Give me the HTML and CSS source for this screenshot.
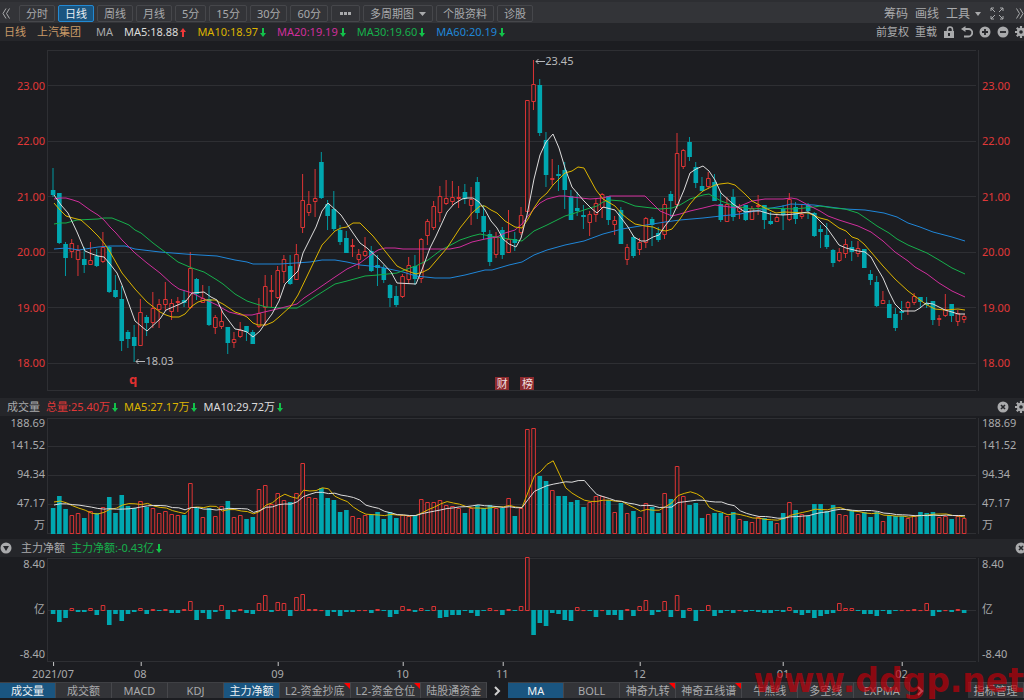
FILE: index.html
```
<!DOCTYPE html>
<html lang="zh-CN">
<head>
  <meta charset="UTF-8">
  <title>上汽集团 日线</title>
  <link rel="stylesheet" href="styles.css">
</head>
<body>
  <svg class="sprite" aria-hidden="true">
    <symbol id="up" viewBox="0 0 6 9"><path d="M3 0 L6 4 H4 V9 H2 V4 H0 Z"/></symbol>
    <symbol id="down" viewBox="0 0 6 9"><path d="M3 9 L6 5 H4 V0 H2 V5 H0 Z"/></symbol>
    <symbol id="gear" viewBox="0 0 12 12">
      <circle cx="6" cy="6" r="3" fill="none" stroke="currentColor" stroke-width="2.4"/>
      <path d="M6 0V3M6 9V12M0 6H3M9 6H12M1.8 1.8L3.8 3.8M8.2 8.2L10.2 10.2M10.2 1.8L8.2 3.8M1.8 10.2L3.8 8.2" stroke="currentColor" stroke-width="2.2"/>
    </symbol>
    <symbol id="close" viewBox="0 0 12 12">
      <circle cx="6" cy="6" r="5.5"/>
      <path d="M4 4L8 8M8 4L4 8" stroke="#25262a" stroke-width="1.6"/>
    </symbol>
  </svg>

  <header class="toolbar">
    <button class="chevron" aria-label="收起"><svg width="8" height="11" viewBox="0 0 8 11"><path d="M4 0.5L1 5.5L4 10.5M7.5 0.5L4.5 5.5L7.5 10.5" fill="none" stroke="currentColor"/></svg></button>
    <nav class="periods">
      <button>分时</button>
      <button class="active">日线</button>
      <button>周线</button>
      <button>月线</button>
      <button>5分</button>
      <button>15分</button>
      <button>30分</button>
      <button>60分</button>
      <button class="more" aria-label="更多"><svg width="13" height="3" viewBox="0 0 13 3"><path d="M1 0h3v3h-3zM5 0h3v3h-3zM9 0h3v3h-3z"/></svg></button>
      <button>多周期图<svg class="caret" width="7" height="4" viewBox="0 0 7 4"><path d="M0 0H7L3.5 4Z"/></svg></button>
      <button>个股资料</button>
      <button>诊股</button>
    </nav>
    <div class="tools">
      <button>筹码</button>
      <button>画线</button>
      <button>工具<svg class="caret" width="6" height="4" viewBox="0 0 6 4"><path d="M0 0H6L3 4Z"/></svg></button>
      <button class="expand" aria-label="全屏"><svg width="14" height="13" viewBox="0 0 14 13"><path d="M1 4V1H4M1 1L5 5M10 1H13V4M13 1L9 5M1 9V12H4M1 12L5 8M13 9V12H10M13 12L9 8" fill="none" stroke="currentColor"/></svg></button>
      <button aria-label="展开"><svg width="8" height="11" viewBox="0 0 8 11"><path d="M0.5 0.5L3.5 5.5L0.5 10.5M4 0.5L7 5.5L4 10.5" fill="none" stroke="currentColor"/></svg></button>
    </div>
  </header>

  <section class="legend main-legend">
    <span class="gold">日线</span>
    <span class="gold">上汽集团</span>
    <span class="ma-name">MA</span>
    <span class="white">MA5:18.88<svg class="arrow up"><use href="#up"/></svg></span>
    <span class="yellow">MA10:18.97<svg class="arrow"><use href="#down"/></svg></span>
    <span class="magenta">MA20:19.19<svg class="arrow"><use href="#down"/></svg></span>
    <span class="green">MA30:19.60<svg class="arrow"><use href="#down"/></svg></span>
    <span class="blue">MA60:20.19<svg class="arrow"><use href="#down"/></svg></span>
    <div class="actions">
      <button>前复权</button>
      <button>重载</button>
      <button aria-label="锁定"><svg class="icon" viewBox="0 0 12 12"><path d="M1 5H11V12H1Z"/><path d="M4.500 5V3.500A2.500 2.500 0 0 1 9.500 3.500V5" fill="none" stroke="currentColor" stroke-width="1.500"/><path d="M5 7H7V10H5Z" fill="#25262a"/></svg></button>
      <button aria-label="撤销"><svg class="icon" viewBox="0 0 12 12"><path d="M2 3H7.500A3.500 3.500 0 0 1 7.500 10.500H3" fill="none" stroke="currentColor" stroke-width="1.800"/><path d="M0 3L4.500 0V6Z"/></svg></button>
      <button aria-label="放大"><svg class="icon" viewBox="0 0 12 12"><circle cx="6" cy="6" r="5.500"/><path d="M3 6H9M6 3V9" stroke="#25262a" stroke-width="1.800"/></svg></button>
      <button aria-label="缩小"><svg class="icon" viewBox="0 0 12 12"><circle cx="6" cy="6" r="5.500"/><path d="M3 6H9" stroke="#25262a" stroke-width="1.800"/></svg></button>
      <button aria-label="设置"><svg class="icon"><use href="#gear"/></svg></button>
    </div>
  </section>

  <section class="panel price-panel">
    <div class="axis price-axis left"><span>23.00</span><span>22.00</span><span>21.00</span><span>20.00</span><span>19.00</span><span>18.00</span></div>
    <div class="plot">
      <svg id="price" viewBox="48 50 930 341" preserveAspectRatio="none"></svg>
      <span class="note high"><svg width="10" height="7" viewBox="0 0 10 7"><path d="M10 3.500H1M3.500 1L1 3.500L3.500 6" fill="none" stroke="currentColor"/></svg>23.45</span>
      <span class="note low"><svg width="10" height="7" viewBox="0 0 10 7"><path d="M10 3.500H1M3.500 1L1 3.500L3.500 6" fill="none" stroke="currentColor"/></svg>18.03</span>
      <span class="mark-q">q</span>
      <span class="tag finance">财</span>
      <span class="tag rank">榜</span>
    </div>
    <div class="axis price-axis right"><span>23.00</span><span>22.00</span><span>21.00</span><span>20.00</span><span>19.00</span><span>18.00</span></div>
  </section>

  <section class="legend volume-legend">
    <span>成交量</span>
    <span class="red">总量:25.40万<svg class="arrow"><use href="#down"/></svg></span>
    <span class="yellow">MA5:27.17万<svg class="arrow"><use href="#down"/></svg></span>
    <span class="white">MA10:29.72万<svg class="arrow"><use href="#down"/></svg></span>
    <div class="actions">
      <button aria-label="关闭"><svg class="icon"><use href="#close"/></svg></button>
      <button aria-label="设置"><svg class="icon"><use href="#gear"/></svg></button>
    </div>
  </section>

  <section class="panel volume-panel">
    <div class="axis volume-axis left"><span>188.69</span><span>141.52</span><span>94.34</span><span>47.17</span><span>万</span></div>
    <div class="plot"><svg id="volume" viewBox="48 418 930 116" preserveAspectRatio="none"></svg></div>
    <div class="axis volume-axis right"><span>188.69</span><span>141.52</span><span>94.34</span><span>47.17</span><span>万</span></div>
  </section>

  <section class="legend flow-legend">
    <button aria-label="选择指标"><svg class="icon" viewBox="0 0 12 12"><circle cx="6" cy="6" r="5.500"/><path d="M3 4H9L6 9Z" fill="#25262a"/></svg></button>
    <span>主力净额</span>
    <span class="green">主力净额:-0.43亿<svg class="arrow"><use href="#down"/></svg></span>
    <div class="actions">
      <button aria-label="关闭"><svg class="icon"><use href="#close"/></svg></button>
    </div>
  </section>

  <section class="panel flow-panel">
    <div class="axis flow-axis left"><span>8.40</span><span>亿</span><span>-8.40</span></div>
    <div class="plot"><svg id="flow" viewBox="48 558 930 104" preserveAspectRatio="none"></svg></div>
    <div class="axis flow-axis right"><span>8.40</span><span>亿</span><span>-8.40</span></div>
  </section>

  <div class="dates" id="dates"></div>

  <footer class="tabs">
    <button class="active">成交量</button>
    <button>成交额</button>
    <button>MACD</button>
    <button>KDJ</button>
    <button class="active">主力净额</button>
    <button class="hot">L2-资金抄底</button>
    <button class="hot">L2-资金仓位</button>
    <button>陆股通资金</button>
    <button class="next" aria-label="更多指标"><svg width="7" height="10" viewBox="0 0 7 10"><path d="M1 1L5 5L1 9" fill="none" stroke="currentColor" stroke-width="2"/></svg></button>
    <button class="active">MA</button>
    <button>BOLL</button>
    <button class="hot">神奇九转</button>
    <button class="hot">神奇五线谱</button>
    <button>牛熊线</button>
    <button>多空线</button>
    <button>EXPMA</button>
    <button class="next" aria-label="更多主图指标"><svg width="7" height="10" viewBox="0 0 7 10"><path d="M1 1L5 5L1 9" fill="none" stroke="currentColor" stroke-width="2"/></svg></button>
    <button class="manage">指标管理</button>
  </footer>

  <div class="watermark">www.ddgp.net</div>

  <script src="chart.js"></script>
</body>
</html>
```
FILE: styles.css
```
* {
  box-sizing: border-box;
}

body {
  margin: 0;
  height: 100vh;
  min-height: 500px;
  display: flex;
  flex-direction: column;
  overflow: hidden;
  position: relative;
  background: #1c1d21;
  color: #a9aaac;
  font-family: "Noto Sans", "Noto Sans CJK SC", sans-serif;
  font-size: 11px;
  line-height: 16px;
  white-space: nowrap;
}

button {
  font: inherit;
  color: inherit;
  background: none;
  border: none;
  padding: 0;
  display: flex;
  align-items: center;
  justify-content: center;
  cursor: pointer;
}

svg {
  fill: currentColor;
  flex: none;
}

.sprite {
  display: none;
}

/* toolbar */
.toolbar {
  flex: none;
  height: 23px;
  padding: 2px 0 0 2px;
  display: flex;
  align-items: center;
  background: #333438;
  border-top: 2px solid #2d2e32;
}

.chevron {
  width: 17px;
  justify-content: flex-start;
}

.periods {
  display: flex;
  gap: 3px;
}

.periods button {
  height: 17px;
  padding: 0 6px;
  border: 1px solid #46474b;
  border-radius: 2px;
}

.periods .more {
  padding: 0 7px;
}

.periods .active {
  background: #1a5580;
  border-color: #2389d3;
  color: #e8eef2;
}

.caret {
  margin-left: 5px;
}

.tools {
  margin-left: auto;
  display: flex;
  align-items: center;
  gap: 7px;
  font-size: 12px;
}

.expand {
  margin: 0 5px 0 2px;
}

/* legends */
.legend {
  flex: none;
  height: 18px;
  display: flex;
  align-items: center;
  gap: 6px;
  padding-left: 7px;
  background: #25262a;
}

.legend span {
  display: flex;
  align-items: center;
}

.main-legend {
  gap: 11px;
  padding-left: 4px;
}

.ma-name {
  margin-left: 4px;
}

.volume-legend {
  margin-top: 7px;
}

.flow-legend {
  margin-top: 5px;
  padding-left: 0;
}

.flow-legend button + span {
  margin-left: 3px;
}

.arrow {
  width: 6px;
  height: 9px;
  margin-left: 2px;
  color: #12c24a;
}

.arrow.up {
  color: #f03838;
}

.actions {
  margin-left: auto;
  margin-right: -3px;
  display: flex;
  gap: 6px;
}

.icon {
  width: 12px;
  height: 12px;
}

.gold { color: #c99a68; }
.white { color: #dcdcdc; }
.yellow { color: #dcb400; }
.magenta { color: #d02e9c; }
.green { color: #16b04c; }
.blue { color: #1f86d8; }
.red { color: #e03838; }

/* chart panels */
.panel {
  display: grid;
  grid-template-columns: 48px minmax(0, 1fr) 46px;
  grid-template-rows: minmax(0, 1fr);
  min-height: 0;
}

.price-panel {
  flex: 341;
  margin-top: 9px;
}

.volume-panel {
  flex: 116;
  margin-top: 2px;
}

.flow-panel {
  flex: 104;
  margin-top: 1px;
}

.plot {
  position: relative;
  min-height: 0;
}

.plot > svg {
  display: block;
  width: 100%;
  height: 100%;
  overflow: visible;
}

.axis.left {
  text-align: right;
  padding-right: 3px;
}

.axis.right {
  padding-left: 4px;
}

.price-axis {
  display: flex;
  flex-direction: column;
  padding-top: 8px;
  color: #e03838;
}

.price-axis span {
  flex: 1;
  display: flex;
  align-items: center;
}

.price-axis.left span {
  justify-content: flex-end;
}

.volume-axis {
  display: grid;
  grid-template-rows: 22fr 29fr 29fr 22fr 14fr;
  line-height: 10px;
}

.flow-axis {
  display: flex;
  flex-direction: column;
  justify-content: space-between;
  padding-bottom: 2px;
  line-height: 12px;
}

/* chart shapes */
.plot path,
.plot line,
.plot rect,
.plot polyline {
  vector-effect: non-scaling-stroke;
}

.grid {
  stroke: #2e2f33;
}

.rise {
  fill: #1c1d21;
  stroke: #dc3434;
}

.fall {
  fill: #00a7b0;
  stroke: none;
}

.wick-rise { stroke: #dc3434; }
.wick-fall { stroke: #009aa2; }

.line {
  fill: none;
  stroke: currentColor;
  stroke-linejoin: round;
}

/* notes over the price chart */
.note {
  position: absolute;
  display: flex;
  align-items: center;
  color: #b9babc;
}

.high {
  left: 52.4%;
  top: 1%;
}

.low {
  left: 9.4%;
  top: 89%;
}

.mark-q {
  position: absolute;
  left: 8.7%;
  top: 94%;
  color: #e03030;
  font-size: 13px;
  font-weight: 700;
}

.tag {
  position: absolute;
  top: 96%;
  width: 14px;
  height: 13px;
  line-height: 13px;
  text-align: center;
  color: #f0dede;
  background: #8c2a2e;
}

.finance { left: 48.1%; }
.rank { left: 50.8%; }

/* date axis */
.dates {
  flex: none;
  height: 20px;
  margin: 0 46px 0 48px;
  position: relative;
}

.dates span {
  position: absolute;
  top: 4px;
  transform: translateX(-50%);
}

.dates span::before {
  content: "";
  position: absolute;
  left: 50%;
  top: -4px;
  width: 1px;
  height: 4px;
  background: #c8c8c8;
}

/* indicator tabs */
.tabs {
  flex: none;
  height: 18px;
  padding-bottom: 2px;
  display: flex;
}

.tabs button {
  position: relative;
  flex: none;
  min-width: 56px;
  padding: 0 5px;
  background: #333438;
  border-top: 1px solid #3f4044;
  border-right: 1px solid #46474b;
}

.tabs .active {
  background: #1a5580;
  color: #eef2f5;
}

.tabs .next {
  min-width: 21px;
  background: none;
  border-color: transparent;
  color: #d0d0d0;
}

.tabs .manage {
  margin-left: auto;
}

.hot::after {
  content: "";
  position: absolute;
  top: 0;
  right: 0;
  border-top: 6px solid #ff0000;
  border-left: 6px solid transparent;
}

.watermark {
  position: absolute;
  right: 0;
  bottom: 0;
  color: rgba(190, 0, 10, 0.7);
  font: bold 33px/38px "DejaVu Sans", sans-serif;
  pointer-events: none;
}
```
FILE: chart.js
```
const STEP = 6.24;
const FIRST = 53;

// rise, high, body top, body bottom, low
const candles = [
  [0,168,190,194,196],[0,193,193,242,243],[0,242,244,257,275],[1,239,243,251,257],[1,245,250,259,275],
  [0,247,259,264,272],[1,242,260,264,264],[0,249,256,265,266],[1,232,247,261,262],[0,246,247,291,292],
  [0,275,290,296,297],[0,286,299,340,350],[0,330,332,338,347],[0,325,337,345,361],[1,299,312,345,345],
  [0,315,317,322,335],[1,292,308,322,327],[1,299,304,309,327],[1,282,299,304,310],[1,299,303,311,319],
  [1,297,301,302,311],[0,290,300,302,306],[1,252,268,307,308],[0,278,279,293,299],[1,285,298,302,302],
  [0,286,299,324,325],[1,315,317,327,333],[1,310,321,326,328],[0,327,327,342,353],[1,332,339,342,347],
  [1,322,330,336,337],[0,326,326,331,340],[0,330,332,343,343],[1,298,313,326,327],[1,275,286,307,325],
  [1,275,290,291,306],[1,266,270,297,298],[1,255,259,271,282],[0,255,266,283,284],[1,244,254,279,279],
  [1,174,200,227,232],[1,191,204,212,215],[1,169,198,201,216],[0,152,162,197,198],[0,200,204,215,229],
  [0,191,209,228,230],[0,225,230,241,244],[0,231,238,252,252],[1,239,245,246,256],[1,249,254,259,268],
  [1,237,251,255,256],[0,246,251,270,271],[0,255,265,267,285],[0,265,268,279,282],[0,284,285,297,306],
  [0,286,296,304,306],[1,274,276,296,297],[1,257,265,279,283],[0,255,266,278,284],[1,238,239,278,282],
  [1,219,221,235,244],[1,201,206,227,229],[1,186,196,212,221],[1,180,198,203,204],[1,181,197,201,204],
  [1,186,197,198,207],[0,184,192,198,203],[1,187,199,205,224],[0,177,182,212,218],[0,205,216,231,238],
  [0,230,234,261,265],[1,232,237,254,257],[0,227,230,254,258],[1,210,239,252,252],[0,232,239,242,250],
  [1,207,215,232,234],[1,100,100,211,211],[1,60,84,101,109],[0,79,85,132,135],[0,132,140,174,186],
  [1,159,178,179,184],[0,165,174,175,190],[0,162,170,189,208],[0,190,196,219,219],[0,192,208,210,215],
  [0,205,215,216,228],[1,211,214,222,235],[1,199,203,214,221],[1,193,194,207,217],[0,196,196,219,224],
  [1,216,220,224,234],[0,207,210,243,243],[1,244,247,259,264],[0,235,237,255,257],[1,238,242,249,254],
  [1,217,218,242,247],[0,217,219,224,245],[0,227,233,239,241],[1,198,204,234,238],[0,191,194,200,217],
  [1,133,153,204,208],[1,149,150,166,168],[0,137,142,156,160],[0,162,167,182,187],[0,177,186,190,190],
  [1,172,178,186,188],[0,174,182,200,200],[0,193,204,219,221],[1,197,204,221,221],[0,189,197,216,220],
  [1,204,207,211,218],[0,205,205,219,220],[1,206,208,219,219],[1,195,205,206,214],[0,205,205,219,228],
  [0,212,221,223,224],[1,215,217,221,221],[0,205,209,214,229],[1,193,199,219,220],[0,202,207,218,223],
  [1,205,214,216,218],[0,203,205,210,218],[0,212,213,235,236],[0,225,229,231,247],[0,223,235,246,248],
  [0,249,250,262,266],[1,248,252,260,261],[1,239,244,253,257],[0,241,247,251,260],[1,241,248,253,256],
  [0,249,249,267,267],[0,270,274,279,284],[0,276,282,305,306],[1,291,300,303,303],[0,300,304,317,317],
  [0,308,314,327,330],[0,301,311,312,319],[1,301,302,307,314],[1,293,296,302,304],[0,297,297,301,307],
  [0,297,303,304,307],[0,301,301,319,324],[1,315,318,319,325],[1,294,309,315,316],[0,304,304,315,321],
  [1,310,313,321,325],[1,314,316,319,322]
];

const priceLines = {
  white: '54,195 61,205 68,213 77,232 85,251 92,254 98,256 104,257 110,264 117,273 122,285 135,321 147,331 160,319 166,310 180,304 186,301 192,293 204,292 211,297 217,300 223,313 235,329 241,330 247,332 253,337 260,331 266,322 272,314 279,301 285,284 298,271 303,253 316,227 322,211 328,203 341,215 353,233 360,243 367,248 379,259 391,272 397,283 416,284 423,267 430,248 436,236 442,223 447,212 454,204 462,199 467,198 473,198 479,202 485,210 491,221 497,228 503,239 509,244 516,247 521,238 527,215 534,179 540,155 546,142 553,134 559,148 565,168 572,187 584,201 591,208 597,213 603,207 615,210 622,219 628,227 634,237 641,241 646,241 653,237 659,235 665,226 672,217 678,204 684,190 690,173 696,169 703,166 709,171 715,180 721,193 733,204 745,212 752,211 760,211 770,214 783,215 795,214 808,212 814,215 827,228 839,245 846,248 858,251 865,252 871,257 877,268 883,278 889,292 895,304 902,311 915,311 920,308 926,303 933,304 945,310 952,312 958,314 965,314',
  yellow: '54,203 60,210 66,216 73,218 81,220 90,228 98,236 104,243 110,252 122,273 135,289 147,302 160,312 166,315 172,317 179,317 185,314 192,306 198,302 205,300 215,300 223,304 235,312 241,314 247,317 253,323 258,325 266,325 273,322 279,317 291,306 298,295 310,270 322,245 335,231 341,228 347,227 353,223 360,223 373,236 385,251 397,266 405,270 416,274 423,272 429,269 441,255 447,248 460,228 472,213 480,206 485,206 491,210 497,213 505,221 515,227 522,228 528,219 534,208 540,199 547,193 553,185 565,173 572,171 578,167 584,168 590,179 596,190 603,199 615,206 622,214 628,219 635,224 645,226 653,227 660,230 666,231 672,229 680,219 690,204 696,197 703,191 715,185 720,184 728,183 735,185 745,194 752,201 765,208 776,213 784,212 808,213 820,218 828,220 839,228 846,231 852,237 858,239 864,244 871,252 883,266 895,279 908,291 920,300 927,305 935,309 945,310 958,309 965,310',
  magenta: '54,199 60,198 66,198 73,200 79,202 90,210 98,215 104,220 110,227 116,233 122,240 129,247 135,253 147,263 160,273 172,284 179,289 192,293 204,299 217,305 222,308 229,312 241,315 252,315 260,313 273,310 285,307 297,304 304,298 316,290 335,277 347,269 360,263 372,254 378,250 385,248 395,248 403,249 450,249 460,247 472,242 485,239 497,237 505,233 515,230 522,224 528,216 534,209 540,203 547,199 559,196 565,196 572,197 590,199 603,198 610,196 645,196 653,204 660,211 672,216 680,214 690,211 703,208 715,205 730,207 735,208 745,204 752,201 765,199 783,199 791,198 797,199 808,205 820,211 828,216 839,220 858,226 871,232 883,241 895,252 908,261 915,267 927,274 939,283 952,291 965,297',
  green: '54,224 60,223 66,223 77,220 98,219 104,218 112,218 122,222 129,225 135,230 141,233 153,243 165,252 178,262 185,265 192,268 204,272 217,280 223,284 235,294 247,301 253,303 266,307 280,308 297,308 304,304 316,296 335,284 347,281 365,276 378,275 397,273 410,268 416,266 428,260 441,250 447,247 460,240 472,236 480,234 490,236 497,237 509,239 522,241 534,231 547,225 559,219 565,216 572,214 590,208 597,206 603,202 610,200 622,201 635,206 660,209 672,208 680,205 690,199 703,195 709,194 721,201 735,206 752,209 765,208 795,209 814,207 820,206 833,208 845,209 858,213 867,219 877,226 889,233 897,239 908,245 927,253 939,260 952,268 965,274',
  blue: '54,249 66,248 79,250 98,247 110,246 125,246 135,249 160,252 185,254 200,255 217,256 235,260 247,262 253,264 280,264 310,262 322,260 335,260 347,262 360,265 380,267 403,272 416,276 435,278 450,278 465,275 485,270 492,270 509,265 522,262 534,255 547,250 565,245 584,241 603,234 622,229 640,226 665,222 680,220 703,218 721,216 740,214 760,210 783,206 791,204 814,205 845,209 865,210 884,213 897,217 908,223 920,227 933,232 952,237 965,241'
};

// the nine days before the visible range, needed by the averages
const earlier = [26,26,26,26,26,33,34,34,33];

const volumes = [
  26,38,25,19,21,16,23,21,27,37,21,39,28,26,33,27,26,21,23,20,19,19,51,26,17,26,18,28,33,17,
  19,15,17,45,49,30,41,34,32,41,71,37,36,46,36,34,22,24,18,16,19,20,22,15,22,16,19,18,18,35,
  32,32,34,29,28,26,21,26,29,26,29,26,26,36,18,26,105,106,58,53,44,38,38,32,34,27,32,38,38,34,
  22,31,21,23,17,31,27,21,41,35,68,38,29,31,16,20,21,21,18,22,15,13,12,17,16,13,11,21,32,24,
  20,18,30,30,23,29,20,19,24,20,22,17,22,13,19,18,18,16,18,22,21,22,17,18,15,18,16
];

const flows = [
  -4,-12,-8,2,-2,-2,2,-5,5,-15,-4,-11,-4,-2,2,-4,1,-1,1,-3,-3,1,9,-10,-3,-9,-2,5,-9,-2,
  1,-3,-4,7,15,-2,8,7,-6,13,16,1,1,0,-6,-2,-6,-2,-2,0,0,-3,1,-1,-7,-4,4,1,-2,2,
  -1,4,-8,-7,-5,-5,-1,-3,-6,-1,2,0,-5,1,-1,4,53,-25,-13,-16,-3,-4,-10,-11,3,0,-1,-7,0,-5,
  -5,-10,1,-6,4,10,-5,-2,9,-7,15,-8,2,-11,-1,5,-6,-3,-1,-3,0,-2,-1,-2,-3,-3,-1,-2,3,-3,
  -5,-3,-8,-6,-4,-3,7,2,2,-1,-4,-4,-6,-1,-4,-1,0,0,1,0,7,-6,-2,0,-2,1,-3
];

const months = [[0, '2021/07'], [14, '08'], [36, '09'], [56, '10'], [72, '11'], [94, '12'], [117, '01'], [136, '02']];

function xAt(i) {
  return FIRST + STEP * i;
}

function hline(y) {
  return `<line class="grid" x1="48" x2="976" y1="${y}" y2="${y}"/>`;
}

function frame(top, bottom) {
  return `<path class="grid" fill="none" d="M47.5 ${top}V${bottom}M978.5 ${top}V${bottom}"/>`;
}

function bar(i, top, bottom, rise) {
  const x = xAt(i);
  if (rise) {
    return `<rect class="rise" x="${x - 1.7}" y="${top + 0.5}" width="3.6" height="${Math.max(bottom - top - 1, 0.1)}"/>`;
  }
  return `<rect class="fall" x="${x - 2.2}" y="${top}" width="4.6" height="${Math.max(bottom - top, 1)}"/>`;
}

function line(name, points) {
  return `<polyline class="line ${name}" points="${points}"/>`;
}

function average(n, i) {
  const all = earlier.concat(volumes);
  const end = i + earlier.length + 1;
  return all.slice(end - n, end).reduce((a, b) => a + b, 0) / n;
}

function drawPrice() {
  let out = frame(50, 391) + [50.5, 85.5, 141.5, 196.5, 252.5, 307.5, 363.5, 390.5].map(hline).join('');
  candles.forEach(([rise, high, top, bottom, low], i) => {
    const x = xAt(i);
    out += `<line class="${rise ? 'wick-rise' : 'wick-fall'}" x1="${x}" x2="${x}" y1="${high}" y2="${low + 1}"/>`;
    out += bar(i, top, bottom + 1, rise);
  });
  for (const name of ['blue', 'green', 'magenta', 'yellow', 'white']) {
    out += line(name, priceLines[name]);
  }
  document.getElementById('price').innerHTML = out;
}

function drawVolume() {
  let out = frame(418, 534) + [418.5, 446.5, 475.5, 504.5, 533.5].map(hline).join('');
  volumes.forEach((v, i) => {
    out += bar(i, 534 - v, 534, candles[i][0]);
  });
  [['yellow', 5], ['white', 10]].forEach(([name, n]) => {
    out += line(name, volumes.map((v, i) => `${xAt(i) + 1},${534 - average(n, i)}`).join(' '));
  });
  document.getElementById('volume').innerHTML = out;
}

function drawFlow() {
  let out = frame(558, 662) + [558.5, 610.5, 661.5].map(hline).join('');
  flows.forEach((v, i) => {
    out += v < 0 ? bar(i, 610, 610 - v, 0) : bar(i, 610 - v, 611, 1);
  });
  document.getElementById('flow').innerHTML = out;
}

function drawDates() {
  document.getElementById('dates').innerHTML = months
    .map(([i, label]) => `<span style="left:${((xAt(i) - 48) / 930) * 100}%">${label}</span>`)
    .join('');
}

drawPrice();
drawVolume();
drawFlow();
drawDates();
```
